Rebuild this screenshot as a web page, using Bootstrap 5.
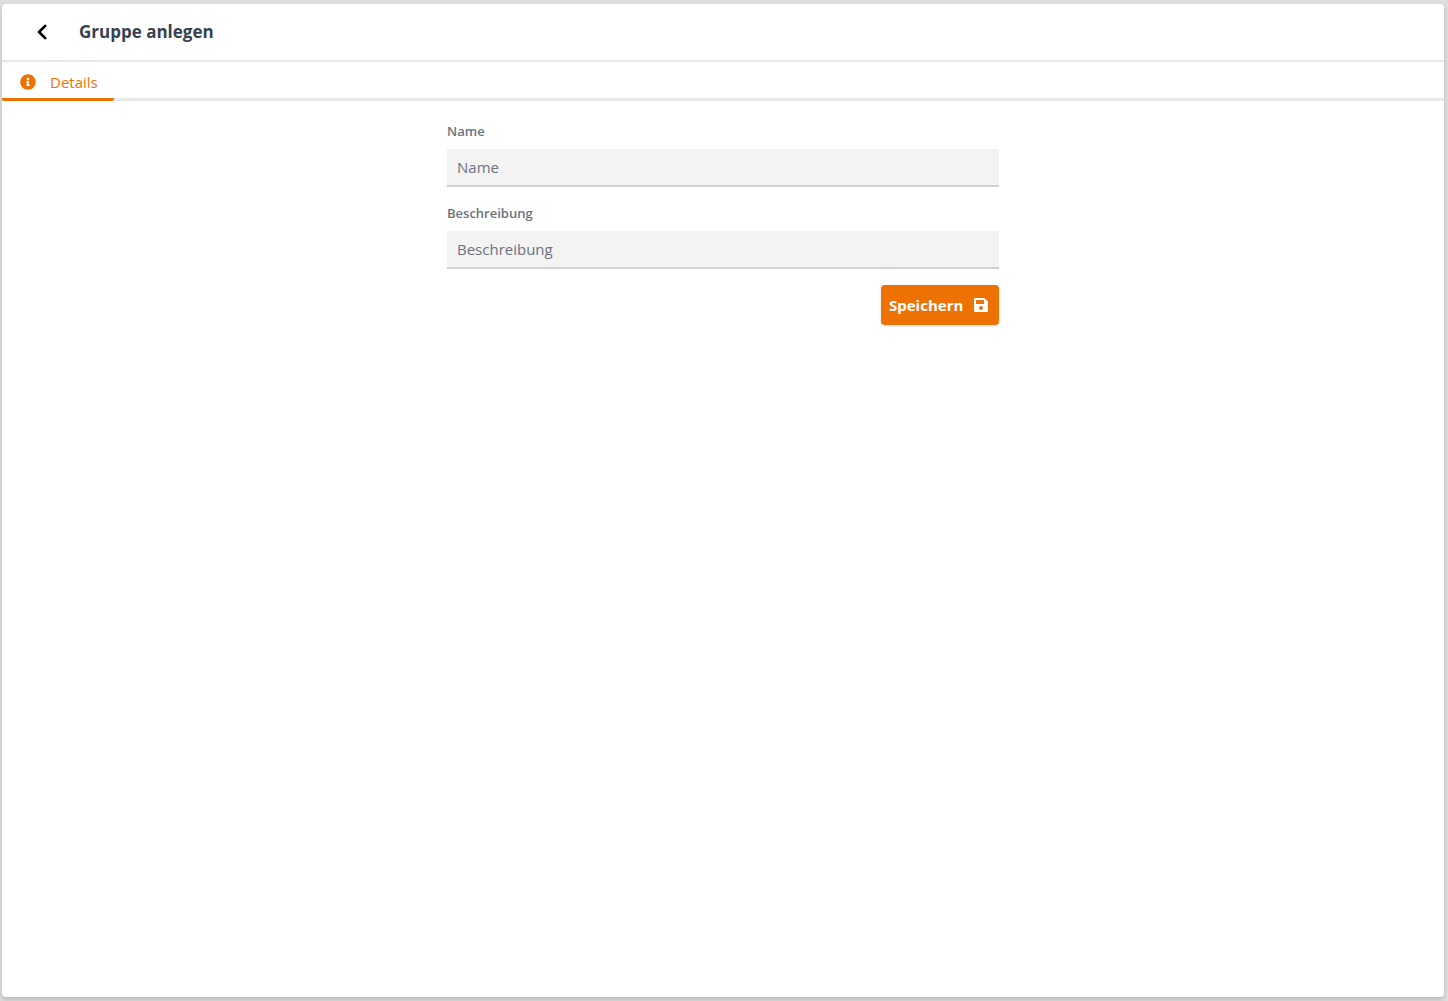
<!DOCTYPE html>
<html lang="de">
<head>
<meta charset="utf-8">
<meta name="viewport" content="width=device-width, initial-scale=1">
<title>Gruppe anlegen</title>
<link href="https://cdn.jsdelivr.net/npm/bootstrap@5.3.0/dist/css/bootstrap.min.css" rel="stylesheet">
<style>
  body { background: #dedede; font-family: "Segoe UI", "Open Sans", "Noto Sans", sans-serif; font-size: 15px; line-height: 24px; padding: 4px 4px 4px 2px; }
  .panel { border-radius: 4px; box-shadow: 0 4px 6px rgba(0,0,0,.1), 0 2px 4px rgba(0,0,0,.06); }
  .panel-head { height: 58px; border-bottom: 2px solid #e5e7eb; padding-left: 28px; gap: 25px; }
  .panel-head h1 { font-size: 17px; line-height: 28px; font-weight: 700; color: #374151; }
  .back { width: 24px; height: 24px; color: #000; }
  .tabs { border-bottom: 3px solid #e9e9e9; }
  .tabs .nav-link { width: 112px; height: 39px; margin-bottom: -3px; padding: 4px 0 0 18px; gap: 14px; color: #ee7203; border-bottom: 3px solid #ee7203; border-radius: 0 0 2px 2px; }
  .group-form { max-width: 552px; padding-top: 20px; }
  .field-label { font-size: 13px; line-height: 20px; font-weight: 600; color: #6b7280; margin-bottom: 8px; }
  .field { height: 38px; padding: 6px 10px; font-size: 15px; line-height: 24px; background: #f3f3f3; border: 0; border-bottom: 2px solid #d1d1d1; border-radius: 0; }
  .field:focus { background: #f3f3f3; box-shadow: none; border-color: #ee7203; }
  .field::placeholder { color: #6b7280; }
  .save { --bs-btn-color: #fff; --bs-btn-bg: #ee7203; --bs-btn-hover-color: #fff; --bs-btn-hover-bg: #d96600; --bs-btn-active-color: #fff; --bs-btn-active-bg: #c95f00; width: 118px; height: 40px; padding: 0 11px 0 8px; border: 0; border-radius: 4px; font-size: 15px; font-weight: 700; box-shadow: 0 1px 3px rgba(0,0,0,.15); }
</style>
</head>
<body class="vh-100">
<main class="panel bg-white h-100">
  <header class="panel-head d-flex align-items-center">
    <button type="button" class="back btn p-0 border-0 d-flex align-items-center justify-content-center" aria-label="Zurück">
      <svg width="10" height="16" viewBox="0 0 10 16" fill="none" stroke="currentColor" stroke-width="2.6" stroke-linecap="round" stroke-linejoin="round"><path d="M8.2 1.8 2 8l6.2 6.2"/></svg>
    </button>
    <h1 class="m-0">Gruppe anlegen</h1>
  </header>
  <nav class="tabs nav">
    <a class="nav-link active d-flex align-items-center" href="#details" aria-current="page">
      <svg width="16" height="16" viewBox="0 0 512 512" fill="currentColor" aria-hidden="true"><path d="M256 8C119 8 8 119 8 256s111 248 248 248 248-111 248-248S393 8 256 8zm0 110c23 0 42 19 42 42s-19 42-42 42-42-19-42-42 19-42 42-42zm56 254c0 7-5 12-12 12h-88c-7 0-12-5-12-12v-24c0-7 5-12 12-12h12v-64h-12c-7 0-12-5-12-12v-24c0-7 5-12 12-12h64c7 0 12 5 12 12v100h12c7 0 12 5 12 12v24z"/></svg>
      <span>Details</span>
    </a>
  </nav>
  <form class="group-form mx-auto" id="details">
    <div class="mb-3">
      <label class="field-label d-block" for="name">Name</label>
      <input class="field form-control" type="text" id="name" placeholder="Name">
    </div>
    <div class="mb-3">
      <label class="field-label d-block" for="beschreibung">Beschreibung</label>
      <input class="field form-control" type="text" id="beschreibung" placeholder="Beschreibung">
    </div>
    <div class="d-flex justify-content-end">
      <button type="submit" class="save btn d-flex align-items-center justify-content-between">
        <span>Speichern</span>
        <svg width="14" height="16" viewBox="0 0 448 512" fill="currentColor" aria-hidden="true"><path d="M434 130 350 46a48 48 0 0 0-34-14H48A48 48 0 0 0 0 80v352a48 48 0 0 0 48 48h352a48 48 0 0 0 48-48V164a48 48 0 0 0-14-34zM224 416a64 64 0 1 1 0-128 64 64 0 0 1 0 128zm96-305v101a12 12 0 0 1-12 12H76a12 12 0 0 1-12-12V108a12 12 0 0 1 12-12h229a12 12 0 0 1 8 4l4 3a12 12 0 0 1 3 8z"/></svg>
      </button>
    </div>
  </form>
</main>
<script src="https://cdn.jsdelivr.net/npm/bootstrap@5.3.0/dist/js/bootstrap.bundle.min.js"></script>
</body>
</html>
